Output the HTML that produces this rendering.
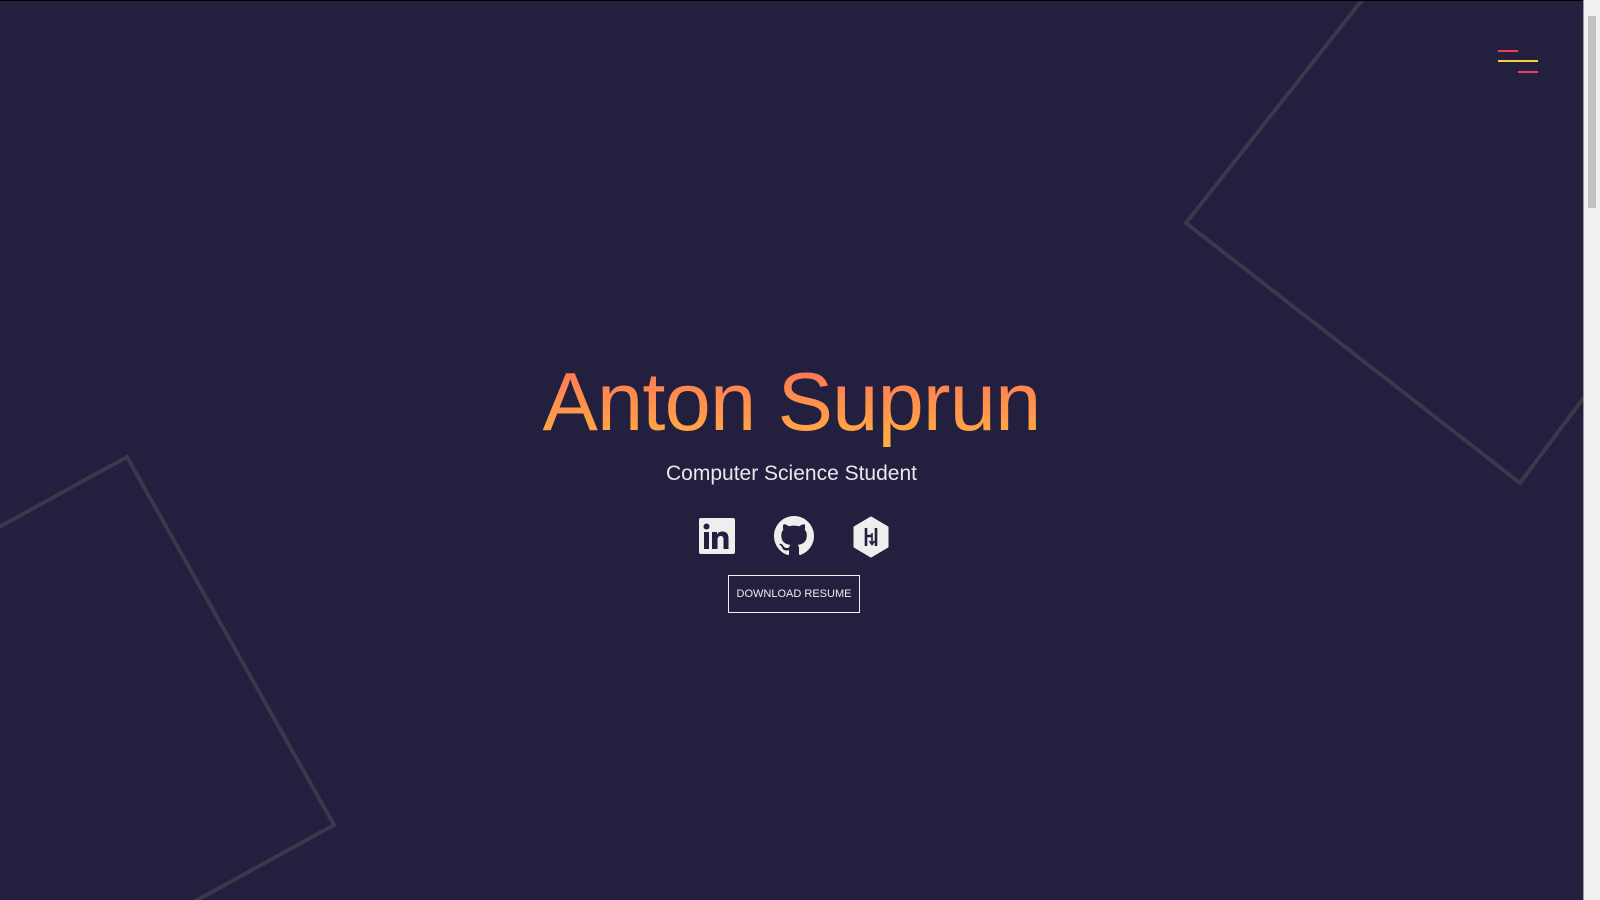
<!DOCTYPE html>
<html><head><style>
html,body{margin:0;padding:0;width:1600px;height:900px;overflow:hidden;background:#221f3f;font-family:"Liberation Sans",sans-serif}
.top{position:absolute;left:0;top:0;width:1583px;height:1px;background:#000}
.sb{position:absolute;left:1583px;top:0;width:17px;height:900px;background:#f1f1f1;border-left:1px solid #999;box-sizing:border-box}
.sb div{position:absolute;left:4px;top:16px;width:8px;height:192px;background:#c1c1c1}
h1{position:absolute;left:0;width:1583px;top:354px;margin:0;text-align:center;font-weight:normal;font-size:83px;letter-spacing:-0.8px;background:linear-gradient(#ff6b5a,#ffb340);-webkit-background-clip:text;color:transparent;line-height:1.15}
.sub{position:absolute;left:0;width:1583px;top:462px;text-align:center;color:#e8e8ee;font-size:21px}
.btn{position:absolute;left:728px;top:575px;width:132px;height:38px;border:1px solid #eee;box-sizing:border-box;color:#eee;font-size:11px;text-align:center;line-height:36px}
.l{position:absolute;height:2px}
</style></head><body>
<svg width="1583" height="900" style="position:absolute;left:0;top:0;overflow:hidden">
<polyline points="1370,-10 1186,223 1520,483 1600,376" fill="none" stroke="#3a3849" stroke-width="4"/>
<polyline points="-200,636 127,457 334,825 -40,1030" fill="none" stroke="#3a3849" stroke-width="4"/>
</svg>
<div class="top"></div>
<div class="sb"><div></div></div>
<div class="l" style="left:1498px;top:50px;width:20px;background:#f03d5e"></div>
<div class="l" style="left:1498px;top:60px;width:40px;background:#fcd03a"></div>
<div class="l" style="left:1518px;top:71px;width:20px;background:#f03d5e"></div>
<h1>Anton Suprun</h1>
<div class="sub">Computer Science Student</div>
<svg width="40" height="40" viewBox="0 0 40 40" style="position:absolute;left:698px;top:517px">
<rect x="1" y="1" width="36" height="36" rx="2" fill="#eee"/>
<rect x="6" y="15" width="5" height="17" fill="#221f3f"/><circle cx="8.5" cy="9.5" r="3" fill="#221f3f"/>
<path d="M14 15h5v2.5c1-2 3-3 5.5-3 4 0 6 2.5 6 7V32h-5v-9.5c0-2.3-.8-3.5-2.7-3.5-2 0-3.3 1.3-3.3 3.6V32h-5.5z" fill="#221f3f"/>
</svg>
<svg width="40" height="40" viewBox="0 0 16 16" style="position:absolute;left:774px;top:516px">
<path fill="#eee" d="M8 0C3.58 0 0 3.58 0 8c0 3.54 2.29 6.53 5.47 7.59.4.07.55-.17.55-.38 0-.19-.01-.82-.01-1.49-2.01.37-2.53-.49-2.69-.94-.09-.23-.48-.94-.82-1.13-.28-.15-.68-.52-.01-.53.63-.01 1.08.58 1.23.82.72 1.21 1.87.87 2.33.66.07-.52.28-.87.51-1.07-1.78-.2-3.64-.89-3.64-3.95 0-.87.31-1.59.82-2.15-.08-.2-.36-1.02.08-2.12 0 0 .67-.21 2.2.82.64-.18 1.32-.27 2-.27.68 0 1.36.09 2 .27 1.53-1.04 2.2-.82 2.2-.82.44 1.1.16 1.92.08 2.12.51.56.82 1.27.82 2.15 0 3.07-1.87 3.75-3.65 3.95.29.25.54.73.54 1.48 0 1.07-.01 1.93-.01 2.2 0 .21.15.46.55.38A8.013 8.013 0 0016 8c0-4.42-3.58-8-8-8z"/>
</svg>
<svg width="38" height="42" viewBox="0 0 38 42" style="position:absolute;left:852px;top:516px">
<path d="M19 2l16 9.5v19L19 40 3 30.5v-19z" fill="#eee" stroke="#eee" stroke-width="3" stroke-linejoin="round"/>
<path d="M14 12v18M24 12v18M14 20h6" stroke="#221f3f" stroke-width="2.6" fill="none"/>
<path d="M20 17v10M17.5 25l2.5 3.5 2.5-3.5" stroke="#221f3f" stroke-width="1.6" fill="none"/>
</svg>
<div class="btn">DOWNLOAD RESUME</div>
</body></html>
